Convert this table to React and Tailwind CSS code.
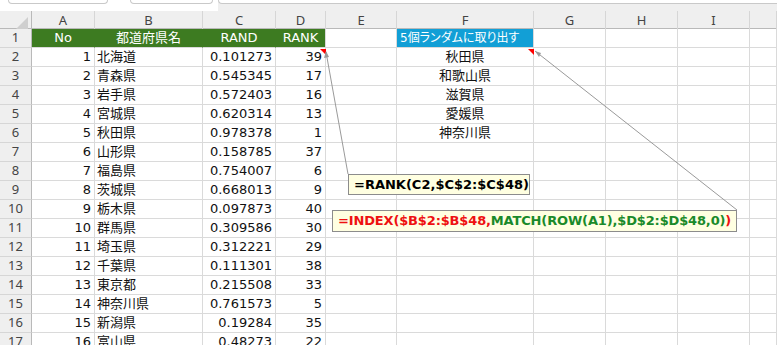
const letters = ["A", "B", "C", "D", "E", "F", "G", "H", "I", ""];

const rows = [
  [1, "北海道", "0.101273", 39, "秋田県"],
  [2, "青森県", "0.545345", 17, "和歌山県"],
  [3, "岩手県", "0.572403", 16, "滋賀県"],
  [4, "宮城県", "0.620314", 13, "愛媛県"],
  [5, "秋田県", "0.978378", 1, "神奈川県"],
  [6, "山形県", "0.158785", 37, ""],
  [7, "福島県", "0.754007", 6, ""],
  [8, "茨城県", "0.668013", 9, ""],
  [9, "栃木県", "0.097873", 40, ""],
  [10, "群馬県", "0.309586", 30, ""],
  [11, "埼玉県", "0.312221", 29, ""],
  [12, "千葉県", "0.111301", 38, ""],
  [13, "東京都", "0.215508", 33, ""],
  [14, "神奈川県", "0.761573", 5, ""],
  [15, "新潟県", "0.19284", 35, ""],
  [16, "富山県", "0.48273", 22, ""],
];

const gridCols =
  "grid grid-cols-[32px_63px_108px_73px_50px_71px_137px_72px_72px_72px_1fr]";

function Cell({ children, className = "" }) {
  return (
    <div
      className={`h-[19px] border-r border-b border-[#dadada] flex items-center overflow-hidden whitespace-nowrap ${className}`}
    >
      {children}
    </div>
  );
}

function RowHead({ n }) {
  return (
    <div className="h-[19px] bg-[#efefef] border-r border-r-[#b9b9b9] border-b border-b-[#d6d6d6] flex items-center justify-center text-[13px] text-[#444] font-['Noto_Sans',sans-serif]">
      {n}
    </div>
  );
}

function DataRow({ r, n }) {
  const [no, pref, rand, rank, pick] = r;
  return (
    <div className={gridCols}>
      <RowHead n={n} />
      <Cell className="justify-end pr-[3px]">{no}</Cell>
      <Cell className="pl-[2px]">{pref}</Cell>
      <Cell className="justify-end pr-[3px]">{rand}</Cell>
      <Cell className="justify-end pr-[3px]">{rank}</Cell>
      <Cell />
      <Cell className="justify-center">{pick}</Cell>
      <Cell />
      <Cell />
      <Cell />
      <Cell />
    </div>
  );
}

export default function App() {
  return (
    <div className="relative w-[777px] h-[345px] overflow-hidden bg-white text-[13px] text-[#111] font-['DejaVu_Sans','Noto_Sans_CJK_JP',sans-serif]">
      {/* toolbar bottoms */}
      <div className="flex h-[11px]">
        <div className="w-[218px] flex items-start bg-white">
          <div className="ml-[8px] w-[100px] h-[4px] border-x border-b border-[#c9c9c9] rounded-b-[5px] bg-white" />
          <div className="ml-[22px] w-[83px] h-[4px] border-x border-b border-[#c9c9c9] rounded-b-[5px] bg-white" />
        </div>
        <div className="flex-1 flex flex-col bg-[#efefef]">
          <div className="h-[4px] border-l border-b border-[#c9c9c9] rounded-bl-[5px] bg-white" />
        </div>
      </div>

      {/* column headers */}
      <div className={`${gridCols} h-[18px] bg-[#efefef] border-b border-[#b9b9b9]`}>
        <div className="relative border-r border-[#b9b9b9]">
          <svg className="absolute right-[3px] bottom-[2px]" width="12" height="12">
            <polygon points="12,0 12,12 0,12" fill="#cfcfcf" />
          </svg>
        </div>
        {letters.map((l, i) => (
          <div
            key={i}
            className="border-r border-[#d6d6d6] flex items-center justify-center text-[13px] text-[#444] font-['Noto_Sans',sans-serif]"
          >
            {l}
          </div>
        ))}
      </div>

      {/* row 1 */}
      <div className={gridCols}>
        <RowHead n={1} />
        <Cell className="bg-[#3d7b21] border-r-[#3d7b21] text-white justify-center">No</Cell>
        <Cell className="bg-[#3d7b21] border-r-[#3d7b21] text-white justify-center">都道府県名</Cell>
        <Cell className="bg-[#3d7b21] border-r-[#3d7b21] text-white justify-center">RAND</Cell>
        <Cell className="bg-[#3d7b21] text-white justify-center">RANK</Cell>
        <Cell />
        <Cell className="bg-[#129fd6] text-white pl-[3px] text-[12px] [font-feature-settings:'palt']">
          5個ランダムに取り出す
        </Cell>
        <Cell />
        <Cell />
        <Cell />
        <Cell />
      </div>

      {rows.map((r, i) => (
        <DataRow key={i} r={r} n={i + 2} />
      ))}

      {/* comment indicators and leader lines */}
      <svg className="absolute inset-0 pointer-events-none" width="777" height="345">
        <polygon points="320,49 326,49 326,55" fill="#ff0000" />
        <polygon points="528,49 534,49 534,55" fill="#ff0000" />
        <line x1="326" y1="52" x2="348" y2="174" stroke="#9a9a9a" strokeWidth="1" />
        <polygon points="326,51 324,58 329,57" fill="#9a9a9a" />
        <line x1="535" y1="51" x2="737" y2="210" stroke="#9a9a9a" strokeWidth="1" />
        <polygon points="535,51 539,57 541,53" fill="#9a9a9a" />
      </svg>

      <div className="absolute left-[348px] top-[174px] w-[182px] h-[21px] bg-[#ffffe1] border border-[#8c8c8c] flex items-center pl-[5px] font-bold text-[13px] text-black whitespace-nowrap">
        =RANK(C2,$C$2:$C$48)
      </div>

      <div className="absolute left-[332px] top-[210px] w-[405px] h-[22px] bg-[#ffffe1] border border-[#8c8c8c] flex items-center pl-[5px] font-bold text-[13px] tracking-[-0.15px] whitespace-nowrap overflow-hidden">
        <span className="text-[#ee1111]">=INDEX($B$2:$B$48,</span>
        <span className="text-[#1a8a2a]">MATCH(ROW(A1),$D$2:$D$48,0)</span>
        <span className="text-[#ee1111]">)</span>
      </div>
    </div>
  );
}
